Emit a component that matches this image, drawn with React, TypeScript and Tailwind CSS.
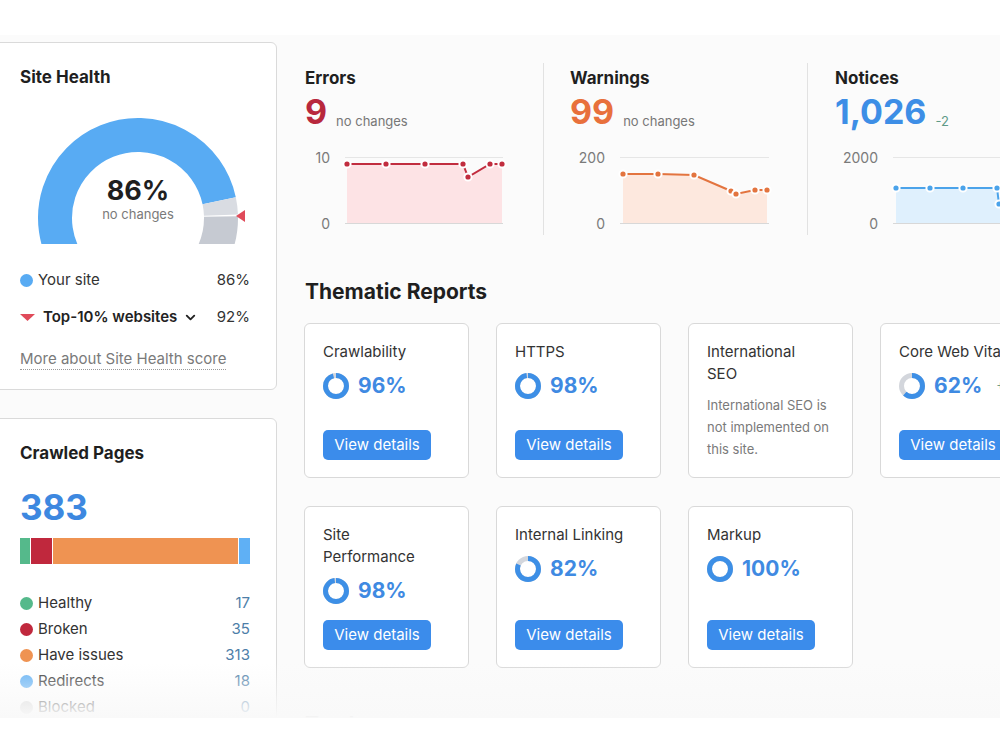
import React from "react";
import { ChevronDown } from "lucide-react";

type Pt = [number, number];

/* ---------- small drawings ---------- */

function Ring({ pct }: { pct: number }) {
  return (
    <svg width="26" height="26" viewBox="0 0 26 26" className="block shrink-0">
      <circle cx="13" cy="13" r="10.5" fill="none" stroke="#d3d6dc" strokeWidth="5" />
      <circle
        cx="13"
        cy="13"
        r="10.5"
        fill="none"
        stroke="#3d8fe6"
        strokeWidth="5"
        pathLength={100}
        strokeDasharray={`${pct} 100`}
        transform="rotate(-90 13 13)"
      />
    </svg>
  );
}

function Gauge() {
  const cx = 118;
  const cy = 102;
  const r = 83;
  const p = (deg: number) => {
    const a = (deg * Math.PI) / 180;
    return `${(cx + r * Math.cos(a)).toFixed(2)},${(cy - r * Math.sin(a)).toFixed(2)}`;
  };
  const arc = (a0: number, a1: number) =>
    `M${p(a0)} A${r},${r} 0 ${a0 - a1 > 180 ? 1 : 0} 1 ${p(a1)}`;
  return (
    <div className="relative h-[130px] w-[230px]">
      <svg width="230" height="130" className="block">
        <defs>
          <clipPath id="gauge-clip">
            <rect x="0" y="0" width="230" height="128" />
          </clipPath>
        </defs>
        <g clipPath="url(#gauge-clip)" fill="none" strokeWidth="34">
          <path d={arc(212, 12)} stroke="#58abf3" />
          <path d={arc(12, 2)} stroke="#d9dce2" />
          <path d={arc(1, -32)} stroke="#c6cad2" />
        </g>
        <path d="M216,100 L225,94 L225,106 Z" fill="#e04b5a" />
      </svg>
      <div className="absolute left-[18px] top-[59px] flex w-[200px] flex-col items-center">
        <div className="text-[27px] font-bold leading-[32px] text-[#1f1f1f]">86%</div>
        <div className="-mt-px text-[13px] leading-[16px] text-[#7a7a7a]">no changes</div>
      </div>
    </div>
  );
}

function Spark({
  width,
  pts,
  line,
  fill,
}: {
  width: number;
  pts: Pt[];
  line: string;
  fill: string;
}) {
  const last = pts[pts.length - 1];
  const area = `M${pts[0][0]},73 L${pts.map((q) => q.join(",")).join(" L")} L${last[0]},73 Z`;
  return (
    <svg width={width} height={82} className="block overflow-visible">
      <line x1={0} x2={width} y1={7.5} y2={7.5} stroke="#e6e6e6" />
      <path d={area} fill={fill} />
      <line x1={0} x2={width} y1={73.5} y2={73.5} stroke="#d8d8d8" />
      <polyline
        points={pts.map((q) => q.join(",")).join(" ")}
        fill="none"
        stroke={line}
        strokeWidth={2}
      />
      {pts.map((q, i) => (
        <circle key={i} cx={q[0]} cy={q[1]} r={3.6} fill={line} stroke="#ffffff" strokeWidth={2} />
      ))}
    </svg>
  );
}

/* ---------- left column ---------- */

function SiteHealth() {
  return (
    <section className="rounded-[6px] border border-[#dadada] bg-white pb-[21px] pl-[30px] pr-[26px] pt-[23px]">
      <h3 className="text-[17px] font-bold leading-[22px] text-[#1f1f1f]">Site Health</h3>
      <div className="mt-[28px]">
        <Gauge />
      </div>
      <div className="mt-[23px] flex h-[22px] items-center text-[15px] text-[#333]">
        <span className="h-[13px] w-[13px] rounded-full bg-[#58abf3]" />
        <span className="ml-[5px]">Your site</span>
        <span className="ml-auto">86%</span>
      </div>
      <div className="mt-[15px] flex h-[22px] items-center text-[15px] text-[#222]">
        <svg width="15" height="7" viewBox="0 0 15 7" className="block">
          <path d="M0,0 L15,0 L7.5,7 Z" fill="#e04b5a" />
        </svg>
        <span className="ml-[8px] font-semibold">Top-10% websites</span>
        <ChevronDown size={15} strokeWidth={3} className="ml-[6px] text-[#222]" />
        <span className="ml-auto text-[#333]">92%</span>
      </div>
      <div className="mt-[18px] h-[22px]">
        <span className="inline-block border-b border-dotted border-[#9a9a9a] text-[15px] leading-[21px] text-[#7a7a7a]">
          More about Site Health score
        </span>
      </div>
    </section>
  );
}

const crawled = [
  { label: "Healthy", value: 17, color: "#55b98b" },
  { label: "Broken", value: 35, color: "#c0283d" },
  { label: "Have issues", value: 313, color: "#ef9352" },
  { label: "Redirects", value: 18, color: "#5fb0f5" },
  { label: "Blocked", value: 0, color: "#cfcfcf" },
];

function CrawledPages() {
  return (
    <section className="rounded-[6px] border border-[#dadada] bg-white pb-[20px] pl-[30px] pr-[26px] pt-[23px]">
      <h3 className="text-[17px] font-bold leading-[22px] text-[#1f1f1f]">Crawled Pages</h3>
      <div className="mt-[23px] text-[35px] font-bold leading-[40px] text-[#3d88e0]">383</div>
      <div className="mt-[11px] flex h-[26px] gap-px">
        {crawled
          .filter((c) => c.value > 0)
          .map((c) => (
            <div key={c.label} className="basis-0" style={{ flexGrow: c.value, background: c.color }} />
          ))}
      </div>
      <ul className="mt-[26px]">
        {crawled.map((c) => (
          <li key={c.label} className="flex h-[26px] items-center text-[15px]">
            <span className="h-[13px] w-[13px] rounded-full" style={{ background: c.color }} />
            <span className="ml-[5px] text-[#333]">{c.label}</span>
            <span className="ml-auto text-[#4d7ea8]">{c.value}</span>
          </li>
        ))}
      </ul>
    </section>
  );
}

/* ---------- summary row ---------- */

function Stat({
  title,
  value,
  valueColor,
  note,
  noteColor,
  labels,
  labelWidth,
  plotWidth,
  pts,
  line,
  fill,
}: {
  title: string;
  value: string;
  valueColor: string;
  note: string;
  noteColor: string;
  labels: [string, string];
  labelWidth: number;
  plotWidth: number;
  pts: Pt[];
  line: string;
  fill: string;
}) {
  return (
    <div className="pt-[4px]">
      <h3 className="text-[17px] font-bold leading-[22px] text-[#1f1f1f]">{title}</h3>
      <div className="mt-[3px] flex h-[40px] items-baseline gap-[9px]">
        <span className="text-[34px] font-bold leading-[40px]" style={{ color: valueColor }}>
          {value}
        </span>
        <span className="translate-y-[2px] text-[13px]" style={{ color: noteColor }}>
          {note}
        </span>
      </div>
      <div className="mt-[18px] flex">
        <div
          className="flex h-[82px] flex-col items-end justify-between pr-[15px] text-[14px] leading-[16px] text-[#7a7a7a]"
          style={{ width: labelWidth }}
        >
          <span>{labels[0]}</span>
          <span>{labels[1]}</span>
        </div>
        <Spark width={plotWidth} pts={pts} line={line} fill={fill} />
      </div>
    </div>
  );
}

/* ---------- thematic reports ---------- */

function ReportCard({
  title,
  pct,
  extra,
  desc,
}: {
  title: string;
  pct?: number;
  extra?: string;
  desc?: string;
}) {
  return (
    <div className="flex flex-col rounded-[6px] border border-[#d9d9d9] bg-white pb-[17px] pl-[18px] pr-[18px] pt-[17px]">
      <div className="flex-1">
        <div className="max-w-[117px] text-[15px] leading-[22px] text-[#333]">{title}</div>
        {desc ? (
          <p className="mt-[9px] text-[13px] leading-[22px] text-[#7a7a7a]">{desc}</p>
        ) : (
          <div className="flex h-[44px] items-center gap-[9px] whitespace-nowrap pt-[2px]">
            <Ring pct={pct ?? 0} />
            <span className="text-[21px] font-bold text-[#3f8ae2]">{pct}%</span>
            {extra && <span className="ml-[5px] text-[13px] text-[#6f9e8e]">{extra}</span>}
          </div>
        )}
      </div>
      {!desc && (
        <button className="mt-[8px] h-[30px] w-[108px] shrink-0 whitespace-nowrap rounded-[5px] bg-[#3b8ceb] text-[15px] text-white">
          View details
        </button>
      )}
    </div>
  );
}

export default function App() {
  return (
    <div className="h-[750px] w-[1000px] overflow-hidden bg-white font-['Inter',sans-serif] text-[#222]">
      <div className="relative mt-[35px] h-[683px] overflow-hidden bg-[#fbfbfb]">
        <div className="flex items-start pt-[7px]">
          <aside className="ml-[-11px] flex w-[288px] shrink-0 flex-col gap-[28px]">
            <SiteHealth />
            <CrawledPages />
          </aside>

          <main className="ml-[27px] mt-[21px] shrink-0">
            <div className="flex h-[172px]">
              <div className="w-[240px] border-r border-[#e2e2e2] pl-px">
                <Stat
                  title="Errors"
                  value="9"
                  valueColor="#b8283d"
                  note="no changes"
                  noteColor="#777777"
                  labels={["10", "0"]}
                  labelWidth={40}
                  plotWidth={158}
                  pts={[[2, 14], [41, 14], [80, 14], [118, 14], [123, 27], [145, 14], [157, 14]]}
                  line="#c12d3f"
                  fill="#fde3e5"
                />
              </div>
              <div className="w-[264px] border-r border-[#e2e2e2] pl-[26px]">
                <Stat
                  title="Warnings"
                  value="99"
                  valueColor="#e8703c"
                  note="no changes"
                  noteColor="#777777"
                  labels={["200", "0"]}
                  labelWidth={50}
                  plotWidth={149}
                  pts={[[3, 24], [38, 24], [74, 25], [111, 41], [116, 44], [135, 40], [147, 40]]}
                  line="#e3743f"
                  fill="#fde8de"
                />
              </div>
              <div className="w-[264px] pl-[27px]">
                <Stat
                  title="Notices"
                  value="1,026"
                  valueColor="#3d8ee6"
                  note="-2"
                  noteColor="#5e9a86"
                  labels={["2000", "0"]}
                  labelWidth={58}
                  plotWidth={140}
                  pts={[[3, 38], [37, 38], [70, 38], [104, 38], [106, 54], [126, 38], [139, 38]]}
                  line="#4ba3ea"
                  fill="#dff0fd"
                />
              </div>
            </div>

            <h2 className="mt-[43px] pl-px text-[21px] font-bold leading-[28px] text-[#1f1f1f]">
              Thematic Reports
            </h2>
            <div className="mt-[17px] grid grid-cols-[repeat(4,165px)] gap-x-[27px] gap-y-[28px]">
              <ReportCard title="Crawlability" pct={96} />
              <ReportCard title="HTTPS" pct={98} />
              <ReportCard
                title="International SEO"
                desc="International SEO is not implemented on this site."
              />
              <ReportCard title="Core Web Vitals" pct={62} extra="+1" />
              <ReportCard title="Site Performance" pct={98} />
              <ReportCard title="Internal Linking" pct={82} />
              <ReportCard title="Markup" pct={100} />
            </div>

            <h2 className="mt-[43px] pl-px text-[21px] font-bold leading-[28px] text-[#1f1f1f]">
              Top Issues
            </h2>
          </main>
        </div>

        <div className="pointer-events-none absolute inset-x-0 bottom-0 h-[55px] bg-linear-to-b from-[#fbfbfb00] to-[#f9f9f9]" />
      </div>
    </div>
  );
}
